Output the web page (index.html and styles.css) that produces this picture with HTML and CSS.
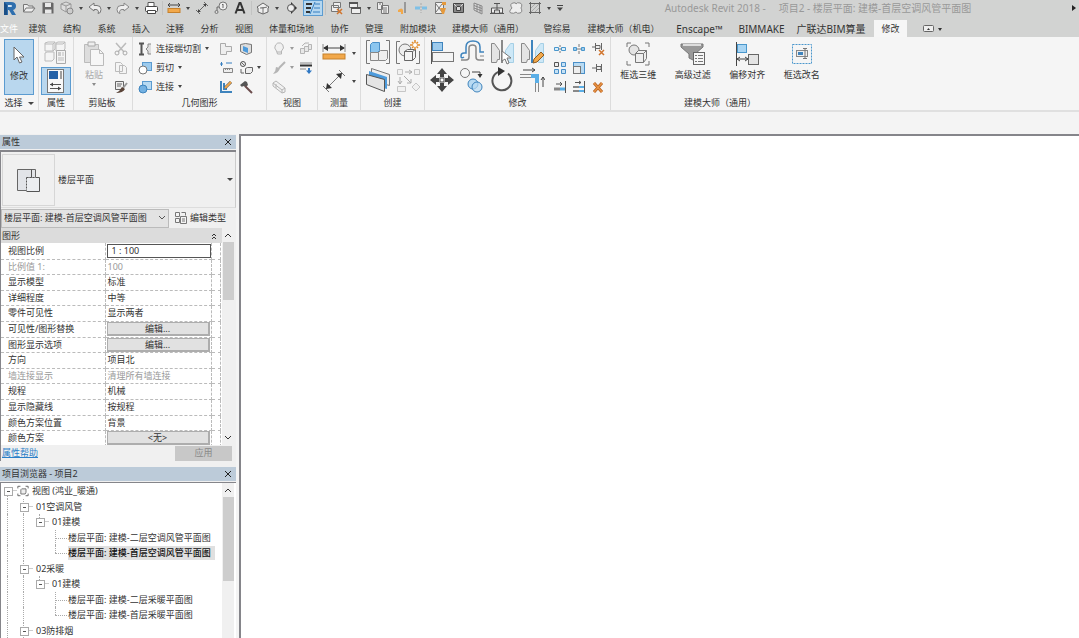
FILE: index.html
```
<!DOCTYPE html>
<html>
<head>
<meta charset="utf-8">
<title>Autodesk Revit 2018</title>
<link rel="stylesheet" href="styles.css">
</head>
<body>
<div class="app">
<header class="quickbar">
  <button class="q" aria-label="Revit"><svg viewBox="0 0 14 14"><path d="M1 1h7q5 0 5 4 0 3-3 4l3 5H9L6 9H5v5H1z" fill="#2f6fae"/><path d="M5 4h3q1 0 1 1t-1 1H5z" fill="#d5e4f2"/><path d="M1 1l3 3v10H1z" fill="#1b4f86"/></svg></button>
  <button class="q" aria-label="打开"><svg viewBox="0 0 14 14"><path d="M1.500 11V3.500h4l1 1.500h4.500v2M1.500 11l2.500-4h9l-3 4z" fill="#eee" stroke="#777"/></svg></button>
  <button class="q" aria-label="保存"><svg viewBox="0 0 14 14"><path d="M1.500 1.500h10l1 1v10h-11z" fill="#666"/><path d="M4 2h6v4H4zM4 8.500h6.500v4H4z" fill="#e8e8e8"/></svg></button>
  <button class="q" aria-label="同步"><svg viewBox="0 0 14 14"><path d="M6 1l5 2v5l-5 3-5-3V3zM1 3l5 2 5-2M6 5v6" fill="#ddd" stroke="#999"/><circle cx="10" cy="10" r="3" fill="#ccc" stroke="#888"/></svg></button>
  <i class="caret"></i>
  <button class="q" aria-label="放弃"><svg viewBox="0 0 14 14"><path d="M1 6l5-4v2.500h3q4 0 4 4t-3 4q1-2 0-3t-2-1H6V10z" fill="#eee" stroke="#777"/></svg></button>
  <i class="caret"></i>
  <button class="q" aria-label="重做"><svg viewBox="0 0 14 14"><path d="M13 6L8 2v2.500H5q-4 0-4 4t3 4q-1-2 0-3t2-1h2V10z" fill="#eee" stroke="#888"/></svg></button>
  <i class="caret"></i>
  <button class="q" aria-label="打印"><svg viewBox="0 0 14 14"><path d="M4 6V1.500h6V6" fill="#fff" stroke="#555"/><rect x="1.500" y="5.500" width="12" height="5" rx="1" fill="#fff" stroke="#444"/><path d="M3.500 9.500h8v3h-8z" fill="#fff" stroke="#444"/></svg></button>
  <i class="sep"></i>
  <button class="q" aria-label="测量"><svg viewBox="0 0 14 14"><path d="M1 4h12M3 2L1 4l2 2M11 2l2 2-2 2" fill="none" stroke="#444"/><rect x="1" y="7.500" width="12" height="4" fill="#f2a84a" stroke="#c6812c"/></svg></button>
  <i class="caret"></i>
  <button class="q" aria-label="对齐标注"><svg viewBox="0 0 14 14"><path d="M3 11l8-8M1 9l4 4M9 1l4 4" stroke="#666" fill="none"/><path d="M3 11V8l3 3zM11 3v3L8 3z" fill="#444"/></svg></button>
  <button class="q" aria-label="标记"><svg viewBox="0 0 14 14"><circle cx="9" cy="5" r="4" fill="#eee" stroke="#777"/><path d="M9 3v4M8 4l1-1M5 6H3v4" stroke="#666" fill="none"/><circle cx="2.500" cy="11" r="1.500" fill="#ddd" stroke="#777"/></svg></button>
  <button class="q" aria-label="文字"><svg viewBox="0 0 14 14"><path d="M2.500 12.500L6.500 2h1l4 10.500M4 9h6" fill="none" stroke="#333" stroke-width="2"/></svg></button>
  <i class="sep"></i>
  <button class="q" aria-label="三维视图"><svg viewBox="0 0 14 14"><path d="M1 6l6-4 6 4-1 1v4l-5 2-5-2V7z" fill="#eee" stroke="#666"/><path d="M7 7v6M4 7h3l4-1" stroke="#777"/></svg></button>
  <i class="caret"></i>
  <button class="q narrow" aria-label="剖面"><svg viewBox="2 0 10 14"><path d="M6 1l6 6-6 6z" fill="#333"/><circle cx="6" cy="7" r="3.500" fill="#eee" stroke="#555"/></svg></button>
  <button class="q on" aria-label="细线"><svg viewBox="0 0 18 14"><path d="M2 3h6M2 7h5M2 11h4" stroke="#333" stroke-width="2"/><path d="M11 3h5M10 7h6M9 11h7M11 1L6 13" stroke="#377fc0" fill="none"/></svg></button>
  <i class="sep tight"></i>
  <button class="q" aria-label="关闭隐藏窗口"><svg viewBox="0 0 14 14"><path d="M4.500 1.500h7v5h-7zM2.500 4.500h7v6h-7z" fill="#eee" stroke="#777"/><path d="M8 8l5 5M13 8l-5 5" stroke="#d0742d" stroke-width="1.500"/></svg></button>
  <button class="q" aria-label="切换窗口"><svg viewBox="0 0 14 14"><path d="M1.500 1.500h8v5h-8zM3.500 6.500h9v6h-9z" fill="#eee" stroke="#666"/><path d="M1 2h9M3 7h10" stroke="#555" stroke-width="2"/></svg></button>
  <i class="caret"></i>
  <button class="q" aria-label="用户界面"><svg viewBox="0 0 14 14"><path d="M1.500 1.500h5v7h-5zM5.500 4.500h7v8h-7z" fill="#eee" stroke="#777"/><path d="M7 7h4M7 9h4M7 11h4M3 3h2" stroke="#777"/></svg></button>
  <button class="q" aria-label="管道"><svg viewBox="0 0 14 14"><path d="M10 1v11" stroke="#999" stroke-width="2"/><path d="M3 9q4-3 5 0v4H6v-2H3z" fill="#f2a84a"/></svg></button>
  <button class="q" aria-label="拆分"><svg viewBox="0 0 14 14"><path d="M1 7h5M8 7h5" stroke="#7fc0e6" stroke-width="3"/><path d="M7 2v10" stroke="#aaa" stroke-dasharray="2 1"/></svg></button>
  <button class="q" aria-label="过滤"><svg viewBox="0 0 14 14"><path d="M2.500 1.500h8v11h-8zM3 3l6 8M9 3l-6 8" fill="#eee" stroke="#777"/><path d="M9 1h4v3H9zM7 7h6l-2 6H9z" fill="#e59a3d"/></svg></button>
  <button class="q" aria-label="竖井"><svg viewBox="0 0 14 14"><path d="M1.500 2.500h10v9h-10z" fill="#888" stroke="#444"/><path d="M4.500 5.500h4v4h-4z" fill="#ddd" stroke="#444"/><path d="M2 3l2.500 2.500M11 3L8.500 5.500" stroke="#ddd"/></svg></button>
  <button class="q" aria-label="墙"><svg viewBox="0 0 14 14"><path d="M3 2l8 3v8L3 9zM3 4.500l8 3M3 7l8 3M6 3v8M9 4v8" fill="#ddd" stroke="#888"/></svg></button>
  <button class="q" aria-label="阀门"><svg viewBox="0 0 14 14"><path d="M1.500 7v5h3V9h5v3h3V7zM7 9V3M4 2.500h6M0 12.500h14" fill="#eee" stroke="#555"/></svg></button>
  <button class="q" aria-label="云线"><svg viewBox="0 0 14 14"><path d="M3 7q-3-4 1-5 3-1 3 1 1-2 4-1t1 5q2 4-1 5t-4-1q-2 2-5 1t1-5z" fill="#eee" stroke="#888"/></svg></button>
  <button class="q" aria-label="填充区域"><svg viewBox="0 0 14 14"><path d="M2.500 1v12M11.500 1v12M1 2.500h12M1 11.500h12" stroke="#666"/><path d="M3 7l4-4M3 11l8-8M7 11l4-4" stroke="#aaa"/></svg></button>
  <i class="caret"></i>
  <svg class="more" viewBox="0 0 8 8"><path d="M1 1.500h6" stroke="#444"/><path d="M1 3.500h6L4 7z" fill="#444"/></svg>
  <h1 class="title">Autodesk Revit 2018 -&nbsp; &nbsp; &nbsp;项目2 - 楼层平面: 建模-首层空调风管平面图</h1>
  <i class="caret right"></i>
</header>

<nav class="tabs">
  <button class="file">文件</button><button>建筑</button><button>结构</button><button>系统</button><button>插入</button><button>注释</button><button>分析</button><button>视图</button><button>体量和场地</button><button>协作</button><button>管理</button><button>附加模块</button><button>建模大师（通用）</button><button>管综易</button><button>建模大师（机电）</button><button class="latin">Enscape™</button><button class="latin">BIMMAKE</button><button class="latin">广联达BIM算量</button><button class="active">修改</button>
  <button class="toggle" aria-label="最小化"><svg viewBox="0 0 20 8"><rect x="1.500" y=".5" width="10" height="6" rx="1" fill="#eee" stroke="#666"/><path d="M5 5l1.500-2L8 5zM16 3h4l-2 3z" fill="#333"/></svg></button>
</nav>

<section class="ribbon">
  <div class="panel p-select">
    <div class="tools"><button class="modify"><svg viewBox="0 0 14 20"><path d="M2 2v13l3-3 2.500 6 2.500-1-2.500-5H12z" fill="#fff" stroke="#666"/></svg>修改</button></div>
    <div class="label">选择 <i class="caret big"></i></div>
  </div>
  <div class="panel p-props">
    <div class="tools stack">
      <button class="half" aria-label="类型属性"><svg viewBox="0 0 28 26"><path d="M3 3l3-1h7v7l-2 2H3zM14 3l2-1h7v7l-2 2h-7zM3 13l2-1h7v7l-2 2H3zM3 4h8v7M11 4l2-2M14 4h7M21 4l2-2" fill="#f4f4f4" stroke="#bbb"/><path d="M14.500 10.500h9v13h-9z" fill="#f4f4f4" stroke="#aaa"/><path d="M16 12h3v4h-3z" fill="#ccc"/><path d="M20 13h2M20 15h2M16 18h6M16 20h6" stroke="#bbb"/></svg></button>
      <button class="half on" aria-label="属性"><svg viewBox="0 0 28 26"><rect x="5.500" y="1.500" width="16" height="23" fill="#f8f8f8" stroke="#777"/><path d="M7 3h9v8H7z" fill="#2462a8"/><path d="M18 4h2M18 6h2M18 8h2M18 10h2" stroke="#444"/><path d="M8 16.500h11M8 20.500h11" stroke="#555"/><path d="M8 16.500l3-2v4zM19 20.500l-3-2v4z" fill="#444"/></svg></button>
    </div>
    <div class="label">属性</div>
  </div>
  <div class="panel p-clip">
    <div class="tools row">
      <button class="paste"><svg viewBox="0 0 24 28"><path d="M2.500 5.500h14v18h-14z" fill="#ddd" stroke="#bbb"/><path d="M6 3h7v4H6z" fill="#eee" stroke="#aaa"/><path d="M8.500 10.500h9l4 4v12h-13z" fill="#f6f6f6" stroke="#bbb"/><path d="M17.500 10.500v4h4" fill="none" stroke="#bbb"/></svg>粘贴<i class="caret"></i></button>
      <div class="col3">
        <button aria-label="剪切到剪贴板"><svg viewBox="0 0 14 14"><path d="M2 1l8 9M12 1L4 10" stroke="#bbb" stroke-width="1.500"/><circle cx="3" cy="11" r="2" fill="none" stroke="#aaa"/><circle cx="11" cy="11" r="2" fill="none" stroke="#aaa"/></svg></button>
        <button aria-label="复制到剪贴板"><svg viewBox="0 0 14 14"><path d="M1.500 1.500h5l2 2v7h-7zM5.500 4.500h5l2 2v6h-7z" fill="#f4f4f4" stroke="#bbb"/></svg></button>
        <button aria-label="匹配类型"><svg viewBox="0 0 14 14"><path d="M1.500 1.500h8v8h-8zM3 4h5M3 6h4" fill="#eee" stroke="#666"/><path d="M13 3L9 8" stroke="#999" stroke-width="2"/><path d="M8 7l3 2q-2 4-9 4 4-2 6-6z" fill="#5a4438"/></svg></button>
      </div>
    </div>
    <div class="label">剪贴板</div>
  </div>
  <div class="panel p-geo">
    <div class="tools geo">
      <div class="col3 left">
        <button><svg viewBox="0 0 14 14"><path d="M1 1.500h5M1 12.500h5M3.500 2v10" stroke="#555" stroke-width="2"/><path d="M13 2h-3v3L8 7l2 2v3h3" fill="#ddd" stroke="#888"/></svg>连接端切割 <i class="caret"></i></button>
        <button><svg viewBox="0 0 14 14"><rect x="4.500" y="1.500" width="9" height="8" fill="#9dcbed" stroke="#5b9bd0"/><circle cx="5" cy="9" r="4" fill="#fff" stroke="#777"/></svg>剪切 <i class="caret"></i></button>
        <button><svg viewBox="0 0 14 14"><rect x="4.500" y="1.500" width="9" height="8" fill="#b8daf2" stroke="#5b9bd0"/><circle cx="5" cy="9" r="4" fill="#73b1e2" stroke="#3f84bd"/></svg>连接 <i class="caret"></i></button>
      </div>
      <div class="col3">
        <button aria-label="连接端"><svg viewBox="0 0 14 14"><path d="M1.500 1.500h5v3h6v5h-5v3h-6z" fill="#eee" stroke="#aaa"/></svg></button>
        <button aria-label="拆分面"><svg viewBox="0 0 14 14"><path d="M1 3h3M2.500 1v4M7 2h6" stroke="#377fc0"/><path d="M4.500 7.500h9v4h-9zM6.500 7v2M8.500 7v2M10.500 7v2" fill="#eee" stroke="#888"/></svg></button>
        <button aria-label="梁柱连接"><svg viewBox="0 0 14 14"><path d="M2 1v11h11M5 3v6h3" stroke="#3f84bd" fill="none" stroke-width="2"/><path d="M6 8l6-6" stroke="#555" stroke-width="3"/><path d="M6 8l6-6" stroke="#f2a84a" stroke-width="2"/></svg></button>
      </div>
      <div class="col3">
        <button aria-label="墙连接"><svg viewBox="0 0 14 14"><path d="M1.500 2.500l5-1 6 1v8l-5 2-6-3z" fill="#ddd" stroke="#777"/><path d="M4 4l5 2v5L4 9z" fill="#4d9bdc"/></svg></button>
        <button aria-label="填色"><svg viewBox="0 0 14 14"><circle cx="4" cy="3" r="2.500" fill="#eee" stroke="#555"/><path d="M2 1l4 4M2 8v4h3M6.500 7.500l2-1h5v4l-2 2h-5z" fill="#eee" stroke="#666"/></svg></button>
        <button aria-label="拆除"><svg viewBox="0 0 14 14"><path d="M1 5l5-4 2 1 1 3-2 2-3-1-1 1z" fill="#555"/><path d="M6 6l7 7" stroke="#6b4c4c" stroke-width="2"/></svg></button>
      </div>
      <i class="caret"></i>
    </div>
    <div class="label">几何图形</div>
  </div>
  <div class="panel p-view">
    <div class="tools row">
      <div class="col3 fade">
        <button aria-label="隐藏"><svg viewBox="0 0 14 14"><path d="M4.500 9q-3-3-1-6t5-2 3 5l-2 3v3h-4zM5 10h4" fill="#eee" stroke="#777"/></svg><i class="caret"></i></button>
        <button aria-label="替换"><svg viewBox="0 0 14 14"><path d="M13 1L7 7" stroke="#777" stroke-width="2"/><path d="M8 7q-1 5-7 6 3-3 3-7z" fill="#777"/></svg><i class="caret"></i></button>
        <button aria-label="选择框"><svg viewBox="0 0 14 14"><path d="M1 3l3-2 9 7v4l-3 1-9-7zM1 3l9 7v3M10 10l3-2M4 4v4" fill="#eee" stroke="#777"/></svg></button>
      </div>
      <div class="col3">
        <button class="dim" aria-label="置换图元"><svg viewBox="0 0 14 14"><path d="M1.500 6.500h4v5h-4zM5.500 4.500h4v5h-4zM9.500 2.500h3v5h-3zM3 4l3-3h4" fill="#ddd" stroke="#777"/></svg></button>
        <button aria-label="线处理"><svg viewBox="0 0 14 14"><path d="M1 2h12" stroke="#888"/><path d="M1 4.500h12" stroke="#333" stroke-width="2"/><path d="M1 8h6" stroke="#888"/><path d="M10 7v4" stroke="#2f78c4" stroke-width="2"/><path d="M7 9.500h6L10 13z" fill="#2f78c4"/></svg></button>
        <span></span>
      </div>
    </div>
    <div class="label">视图</div>
  </div>
  <div class="panel p-measure">
    <div class="tools stack">
      <button class="half" aria-label="测量"><svg viewBox="0 0 24 24"><path d="M2 7h20" stroke="#444"/><path d="M1 7l5-3v6zM23 7l-5-3v6z" fill="#333"/><path d="M1 3v8M23 3v8" stroke="#888"/><rect x="1" y="13" width="22" height="5" fill="#f2a84a" stroke="#c6812c"/></svg><i class="caret"></i></button>
      <button class="half" aria-label="标注"><svg viewBox="0 0 24 24"><path d="M4 20L20 4M1 17l6 6M17 1l6 6" stroke="#777"/><path d="M4 20l1-6 5 5zM20 4l-6 1 5 5z" fill="#333"/></svg><i class="caret"></i></button>
    </div>
    <div class="label">测量</div>
  </div>
  <div class="panel p-create">
    <div class="tools grid2">
      <button aria-label="创建组"><svg viewBox="0 0 26 26"><path d="M5 1.500H1.500v23H5M21 1.500h3.500v23H21" fill="none" stroke="#777"/><path d="M5.500 5.500l2-2h7v8l-2 2h-7z" fill="#8cc6ef" stroke="#4a8fc7"/><path d="M5.500 13.500h8v8h-8zM13.500 13.500l2-2h7v8l-2 2h-7" fill="#eee" stroke="#888"/></svg></button>
      <button aria-label="创建类似实例"><svg viewBox="0 0 26 26"><path d="M5 2.500H1.500v22H5M21 24.500h3.500V12" fill="none" stroke="#777"/><circle cx="10" cy="11" r="6" fill="#eee" stroke="#777"/><path d="M9.500 12.500l3-2h8v8l-3 3h-8zM9.500 12.500h8v9M17.500 12.500l3-2" fill="#f4f4f4" stroke="#666"/><path d="M20 1v10M15 6h10M17 3l6 6M23 3l-6 6" stroke="#e08b2a" stroke-width="1.500"/><circle cx="20" cy="6" r="2" fill="#fff"/></svg></button>
      <button aria-label="创建部件"><svg viewBox="0 0 26 26"><path d="M6.500 1.500l18 6v11l-18-5z" fill="#eee" stroke="#777"/><path d="M4 4l18 6v12L4 17z" fill="#4d9bdc"/><path d="M1.500 7.500l18 5v12l-18-7z" fill="#e4e4e4" stroke="#555"/></svg></button>
      <button class="dim" aria-label="创建零件"><svg viewBox="0 0 26 26"><path d="M2.500 2.500h5v5h-5zM19.500 2.500h5v5h-5zM2.500 19.500h8v5h-8zM17 20l4-4 4 4-4 4z" fill="#eee" stroke="#999"/><path d="M10 5h7M14 3l3 2-3 2M5 10v7M3 14l2 3 2-3M9 9l7 7M16 12v4h-4" stroke="#666" fill="none"/></svg></button>
    </div>
    <div class="label">创建</div>
  </div>
  <div class="panel p-edit">
    <div class="tools editgrid">
      <div class="grid4">
        <button aria-label="对齐"><svg viewBox="0 0 26 26"><path d="M2.500 1v24" stroke="#555"/><rect x="3.500" y="3.500" width="10" height="8" fill="#9dcbed" stroke="#3f84bd"/><rect x="3.500" y="13.500" width="21" height="9" fill="#f4f4f4" stroke="#777"/></svg></button>
        <button aria-label="偏移"><svg viewBox="0 0 26 26"><path d="M2 21h5q3 0 3-3V9q0-3 3.500-3T17 9v9q0 3 3 3h5" fill="none" stroke="#888" stroke-width="1.500"/><path d="M25 13h-4V8q0-6-7-6T7 8v6H5q-3 0-3 3t3 1h0" fill="none" stroke="#3f84bd" stroke-width="1.500"/><path d="M25 17h-4" stroke="#888"/></svg></button>
        <button aria-label="镜像拾取轴"><svg viewBox="0 0 26 26"><path d="M2.500 4.500h3l5 7v9h-2l-1 3h-5z" fill="#e4e4e4" stroke="#888"/><path d="M24.500 4.500h-3l-5 7v9h2l1 3h5z" fill="#cde8f7" stroke="#a5cfe5"/><path d="M13 1v23" stroke="#666" stroke-width="1.500"/><path d="M13 12v10l3-2 2 5 2-1-2-5h4z" fill="#fff" stroke="#777"/></svg></button>
        <button aria-label="镜像绘制轴"><svg viewBox="0 0 26 26"><path d="M2.500 4.500h3l5 7v9h-2l-1 3h-5z" fill="#e4e4e4" stroke="#888"/><path d="M24.500 4.500h-3l-5 7v9h2l1 3h5z" fill="#cde8f7" stroke="#a5cfe5"/><path d="M13 1v23" stroke="#3f84bd" stroke-width="2"/><path d="M14 24l1-4 7-7 3 3-7 7z" fill="#f2a84a" stroke="#8a5a22"/></svg></button>
        <button aria-label="移动"><svg viewBox="0 0 26 26"><path d="M13 1l5 6h-3v3h-4V7H8zM13 25l5-6h-3v-3h-4v3H8zM1 13l6-5v3h3v4H7v3zM25 13l-6-5v3h-3v4h3v3z" fill="#444"/><rect x="11" y="11" width="4" height="4" fill="#fff" stroke="#444"/></svg></button>
        <button aria-label="复制"><svg viewBox="0 0 26 26"><circle cx="6" cy="6" r="4.500" fill="#f6f6f6" stroke="#777"/><path d="M13 5h8v4" fill="none" stroke="#444"/><path d="M18.500 7h5L21 11z" fill="#333"/><circle cx="14" cy="17" r="5" fill="#b8daf2" stroke="#3f84bd"/><circle cx="18" cy="20" r="5" fill="#b8daf2" fill-opacity=".7" stroke="#3f84bd"/></svg></button>
        <button aria-label="旋转"><svg viewBox="0 0 26 26"><path d="M19 6.500a9.500 9.500 0 1 1-8-2" fill="none" stroke="#555" stroke-width="2"/><path d="M9 0l7 4-7 5z" fill="#333"/></svg></button>
        <button aria-label="修剪延伸为角"><svg viewBox="0 0 26 26"><path d="M1 7.500h12M1 10.500h12M16.500 14v11M19.500 14v11" stroke="#888"/><path d="M12 9h6v7" fill="none" stroke="#5aaee6" stroke-width="4"/><path d="M4 3h12M13 1l3 2-3 2M24 20V10M22 13l2-3 2 3" fill="none" stroke="#444"/></svg></button>
      </div>
      <div class="grid3">
        <button aria-label="拆分图元"><svg viewBox="0 0 14 14"><path d="M1.500 5.500h4v3h-4zM8.500 5.500h4v3h-4z" fill="#dbeffb" stroke="#4a97cc"/><path d="M7 3v9" stroke="#777" stroke-dasharray="2 1"/></svg></button>
        <button aria-label="用间隙拆分"><svg viewBox="0 0 14 14"><path d="M1.500 5.500h3v3h-3zM9.500 5.500h3v3h-3z" fill="#9dcbed" stroke="#4a97cc"/><path d="M7 2v3M7 9v3M5 7h4" stroke="#777"/></svg></button>
        <button aria-label="解锁"><svg viewBox="0 0 14 14"><path d="M1 5h3M4.500 1v8M5 3.500h4v3H5M10.500 1v7" fill="#eee" stroke="#666"/><path d="M8 8l5 5M13 8l-5 5" stroke="#d0742d" stroke-width="1.500"/></svg></button>
        <button aria-label="阵列"><svg viewBox="0 0 14 14"><path d="M1.500 1.500h4v4h-4z" fill="#eee" stroke="#555"/><path d="M8.500 1.500h4v4h-4zM1.500 8.500h4v4h-4zM8.500 8.500h4v4h-4z" fill="#c6e2f5" stroke="#4a8fc7"/></svg></button>
        <button aria-label="缩放"><svg viewBox="0 0 14 14"><rect x="1.500" y="1.500" width="11" height="11" fill="#b8daf2" stroke="#4a8fc7"/><rect x="1.500" y="5.500" width="7" height="7" fill="#eee" stroke="#777"/></svg></button>
        <button aria-label="锁定"><svg viewBox="0 0 14 14"><path d="M1 7h4M5.500 3v8M6 5.500h4v3H6M10.500 3v8" fill="#eee" stroke="#666"/></svg></button>
        <button aria-label="修剪单个图元"><svg viewBox="0 0 14 14"><path d="M12.500 1v12M3 4h6M7 2l2 2-2 2" fill="none" stroke="#555"/><path d="M1 9h6" stroke="#888" stroke-width="3"/><path d="M7 9h5" stroke="#5aaee6" stroke-width="3"/></svg></button>
        <button aria-label="修剪多个图元"><svg viewBox="0 0 14 14"><path d="M12.500 1v12M3 2.500h6M7 1l2 1.500L7 4" fill="none" stroke="#555"/><path d="M1 7h6M1 11h6" stroke="#888" stroke-width="2"/><path d="M7 7h5M7 11h5" stroke="#5aaee6" stroke-width="2"/></svg></button>
        <button aria-label="删除"><svg viewBox="0 0 14 14"><path d="M3 3l8 9M11 3L3 12" stroke="#b86020" stroke-width="3"/><path d="M3 3l8 9M11 3L3 12" stroke="#e79343" stroke-width="1.500"/></svg></button>
      </div>
    </div>
    <div class="label">修改</div>
  </div>
  <div class="panel p-master">
    <div class="tools row">
      <button><svg viewBox="0 0 26 26"><path d="M2 6V2h4M20 2h4v4M24 20v4h-4M6 24H2v-4" fill="none" stroke="#777"/><circle cx="9" cy="9" r="5" fill="#e4e4e4" stroke="#777"/><path d="M10.500 12.500l3-3h8v8l-3 4h-8zM10.500 12.500h8v9M18.500 12.500l3-3" fill="#eee" stroke="#777"/></svg>框选三维</button>
      <button><svg viewBox="0 0 26 26"><path d="M1 3h22v3l-8 7v7l-6-3v-4L1 6z" fill="#999" stroke="#777"/><path d="M3 4h18" stroke="#ddd" stroke-width="2"/><rect x="13.500" y="11.500" width="11" height="12" fill="#f6f6f6" stroke="#666"/><path d="M15 14.500h2M18 14.500h5M15 17.500h2M18 17.500h5M15 20.500h2M18 20.500h5" stroke="#777"/></svg>高级过滤</button>
      <button><svg viewBox="0 0 26 26"><path d="M2.500 1v24" stroke="#444"/><rect x="3.500" y="3.500" width="9" height="8" fill="#a9d5f3" stroke="#4a97cc"/><rect x="14.500" y="13.500" width="10" height="10" fill="#e4e4e4" stroke="#666"/><path d="M3 18h11M6 16l-3 2 3 2M11 16l3 2-3 2" fill="none" stroke="#444"/></svg>偏移对齐</button>
      <button><svg viewBox="0 0 26 26"><rect x="3.500" y="3.500" width="19" height="19" fill="none" stroke="#4a97cc" stroke-dasharray="2 1"/><rect x="7.500" y="9.500" width="11" height="6" fill="#eee" stroke="#888"/><path d="M9 11h5v3H9z" fill="#3f84bd"/><path d="M16 7v11M14 7.500h4M14 17.500h4" stroke="#777"/></svg>框选改名</button>
    </div>
    <div class="label">建模大师（通用）</div>
  </div>
</section>
<div class="options"></div>

<div class="work">
  <aside class="side">
    <section class="palette">
      <h2>属性<button class="close" aria-label="关闭"><svg viewBox="0 0 8 8"><path d="M1 1l6 6M7 1L1 7" stroke="#222"/></svg></button></h2>
      <div class="body">
        <button class="type"><span class="thumb"><svg viewBox="0 0 26 26"><path d="M1.500 2.500h18v8h-8v13h-10z" fill="#e2e4e8" stroke="#666"/><path d="M10.500 10.500h13v14h-13z" fill="#eceef1"/><path d="M10.500 10.500v13M10.500 10.500h9" stroke="#555" stroke-dasharray="2 1" fill="none"/><path d="M15.500 2.500v8M19.500 10.500h4v14h-13" stroke="#555" fill="none"/></svg></span><span class="typename">楼层平面</span><i class="caret big"></i></button>
        <div class="selrow">
          <select aria-label="视图"><option>楼层平面: 建模-首层空调风管平面图</option></select>
          <button class="edittype"><svg viewBox="0 0 14 14"><path d="M1.500 1.500h4v4h-4zM1.500 7.500h4v4h-4zM7.500 1.500h4v3M6.500 5.500h6v7h-6zM8 8h3M8 10h3" fill="#f4f4f4" stroke="#777"/></svg>编辑类型</button>
        </div>
        <div class="scrollwrap">
          <div class="props">
            <div class="group">图形<svg viewBox="0 0 8 8"><path d="M2 4l2-2 2 2M2 7l2-2 2 2" fill="none" stroke="#333"/></svg></div>
            <table>
              <tr><th><label for="scale">视图比例</label></th><td><input id="scale" value="1 : 100"></td><td></td></tr>
              <tr class="off"><th>比例值 1:</th><td>100</td><td></td></tr>
              <tr><th>显示模型</th><td>标准</td><td></td></tr>
              <tr><th>详细程度</th><td>中等</td><td></td></tr>
              <tr><th>零件可见性</th><td>显示两者</td><td></td></tr>
              <tr><th>可见性/图形替换</th><td><button>编辑...</button></td><td></td></tr>
              <tr><th>图形显示选项</th><td><button>编辑...</button></td><td></td></tr>
              <tr><th>方向</th><td>项目北</td><td></td></tr>
              <tr class="off"><th>墙连接显示</th><td>清理所有墙连接</td><td></td></tr>
              <tr><th>规程</th><td>机械</td><td></td></tr>
              <tr><th>显示隐藏线</th><td>按规程</td><td></td></tr>
              <tr><th>颜色方案位置</th><td>背景</td><td></td></tr>
              <tr><th>颜色方案</th><td><button>&lt;无&gt;</button></td><td></td></tr>
            </table>
          </div>
          <div class="scroll"><svg viewBox="0 0 8 8"><path d="M1 6l3-3 3 3" fill="none" stroke="#333"/></svg><i class="thumbbar"></i><svg viewBox="0 0 8 8"><path d="M1 2l3 3 3-3" fill="none" stroke="#333"/></svg></div>
        </div>
        <div class="foot"><a href="#help">属性帮助</a><button disabled>应用</button></div>
      </div>
    </section>
    <section class="palette browser">
      <h2>项目浏览器 - 项目2<button class="close" aria-label="关闭"><svg viewBox="0 0 8 8"><path d="M1 1l6 6M7 1L1 7" stroke="#222"/></svg></button></h2>
      <div class="treewrap">
        <ul class="tree">
          <li><i class="g top0 box"></i><svg viewBox="0 0 14 14"><path d="M1 4V1.500h3M10 1.500h3V4M13 10v2.500h-3M4 12.500H1V10" fill="none" stroke="#555"/><path d="M4.500 5.500l1-1h5v4l-1 2h-5z" fill="#eee" stroke="#666"/></svg><span>视图 (鸿业_暖通)</span></li>
          <li><i class="g v"></i><i class="g v box"></i><span>01空调风管</span></li>
          <li><i class="g v"></i><i class="g v"></i><i class="g end box"></i><span>01建模</span></li>
          <li><i class="g v"></i><i class="g v"></i><i class="g"></i><i class="g v leaf"></i><span>楼层平面: 建模-二层空调风管平面图</span></li>
          <li><i class="g v"></i><i class="g v"></i><i class="g"></i><i class="g end leaf"></i><span class="cur">楼层平面: 建模-首层空调风管平面图</span></li>
          <li><i class="g v"></i><i class="g v box"></i><span>02采暖</span></li>
          <li><i class="g v"></i><i class="g v"></i><i class="g end box"></i><span>01建模</span></li>
          <li><i class="g v"></i><i class="g v"></i><i class="g"></i><i class="g v leaf"></i><span>楼层平面: 建模-二层采暖平面图</span></li>
          <li><i class="g v"></i><i class="g v"></i><i class="g"></i><i class="g end leaf"></i><span>楼层平面: 建模-首层采暖平面图</span></li>
          <li><i class="g v"></i><i class="g v box"></i><span>03防排烟</span></li>
        </ul>
        <div class="scroll"><svg viewBox="0 0 8 8"><path d="M1 6l3-3 3 3" fill="none" stroke="#333"/></svg><i class="thumbbar"></i></div>
      </div>
    </section>
  </aside>
  <main class="canvas"></main>
</div>
</div>
</body>
</html>
```

FILE: styles.css
```
* { box-sizing: border-box; }
body { margin: 0; font: 9px/12px "Noto Sans", "Noto Sans CJK SC", sans-serif; color: #333; background: #f4f4f4; }
button { font: inherit; color: inherit; background: none; border: 0; padding: 0; white-space: nowrap; }
svg { display: block; flex: none; }
h1, h2 { margin: 0; font-weight: normal; }
.app { height: 100vh; display: flex; flex-direction: column; overflow: hidden; }

.caret { flex: none; width: 4px; border: 2px solid transparent; border-top: 3px solid #444; border-bottom: 0; }
.caret.big { width: 6px; border-width: 3px 3px 0; }
.caret.right { border: 3px solid transparent; border-left: 4px solid #222; border-right: 0; }
.more { width: 8px; height: 8px; }

.quickbar { display: flex; align-items: center; gap: 5px; height: 20px; padding: 0 3px 4px 3px; background: #d2d3d2; flex: none; }
.q { flex: none; width: 14px; }
.q svg { width: 14px; height: 14px; }
.q.narrow { width: 10px; margin: 0 1px 0 3px; }
.q.narrow svg { width: 10px; }
.q.on { width: 20px; height: 16px; border: 1px solid #5b9bd0; background: #b5d7f0; }
.q.on svg { width: 18px; }
.sep { flex: none; width: 1px; height: 14px; background: #c2c3c2; margin: 0 -1px; }
.sep.tight { margin: 0 -2px 0 -3px; }
.title { flex: 1; text-align: center; font-size: 10px; color: #999; white-space: nowrap; overflow: hidden; }

.tabs { flex: none; display: grid; grid-template-columns: 20px 35px 34px 35px 34px 34px 35px 34px 61px 35px 34px 54px 86px 52px 81px 71px 53px 86px 33px auto; height: 17px; align-items: center; background: #d2d3d2; }
.tabs button { height: 17px; text-align: center; }
.tabs .latin { font-size: 10px; }
.tabs .file { color: #fff; text-align: left; }
.tabs .active { background: #f6f6f6; }
.tabs .toggle { padding-left: 15px; }
.toggle svg { width: 20px; height: 8px; }

.ribbon { flex: none; display: flex; height: 75px; background: #f5f5f5; border-bottom: 2px solid #e0e0e0; }
.panel { flex: none; display: flex; flex-direction: column; border-right: 1px solid #dcdcdc; }
.panel:last-child { border-right: 0; }
.tools { height: 58px; padding-top: 2px; display: flex; }
.label { display: flex; align-items: center; justify-content: center; gap: 5px; height: 15px; padding-top: 1px; white-space: nowrap; }
.row { flex-direction: row; }
.stack { flex-direction: column; align-items: center; }
.col3 { display: grid; grid-template-rows: repeat(3, 19px); align-items: center; }
.col3 svg { width: 14px; height: 14px; }
.col3 button { display: flex; align-items: center; gap: 4px; }
.dim, .fade { opacity: .5; }

.p-select { width: 39px; }
.modify { width: 30px; height: 56px; margin-left: 4px; border: 1px solid #5b9bd0; background: #b9d7ee; display: flex; flex-direction: column; align-items: center; gap: 5px; padding-top: 5px; }
.modify svg { width: 14px; height: 20px; }
.p-props { width: 35px; }
.half { width: 30px; height: 28px; display: flex; align-items: center; justify-content: center; flex: none; }
.half svg { width: 28px; height: 26px; }
.half.on { border: 1px solid #5b9bd0; background: #b9d7ee; }
.p-clip { width: 59px; }
.paste { width: 40px; display: flex; flex-direction: column; align-items: center; color: #aaa; gap: 2px; }
.paste svg { width: 24px; height: 28px; }
.paste .caret { opacity: .6; }
.p-clip .label { padding-right: 2px; }
.p-geo { width: 134px; }
.geo { padding-left: 5px; gap: 6px; align-items: flex-start; }
.geo .left { width: 75px; }
.geo > .caret { margin: 27px 0 0 -2px; }
.p-view { width: 51px; }
.p-view .row { padding-left: 5px; gap: 5px; }
.p-view .fade { width: 22px; }
.p-measure { width: 43px; }
.p-measure .half { width: 34px; gap: 6px; }
.p-measure .half svg { width: 24px; height: 24px; }
.p-create { width: 64px; }
.grid2 { display: grid; grid-template-columns: 26px 26px; gap: 2px 4px; padding-left: 4px; align-content: start; }
.grid2 svg, .grid4 svg, .p-master svg { width: 26px; height: 26px; }
.p-edit { width: 186px; }
.editgrid { gap: 8px; padding-left: 4px; }
.grid4 { display: grid; grid-template-columns: repeat(4, 26px); gap: 2px 4px; align-content: start; }
.grid3 { display: grid; grid-template-columns: repeat(3, 14px); grid-template-rows: repeat(3, 19px); column-gap: 5px; align-items: center; }
.grid3 svg { width: 14px; height: 14px; }
.p-master { width: 218px; }
.p-master button { width: 55px; display: flex; flex-direction: column; align-items: center; gap: 2px; height: 42px; margin-top: 2px; }

.options { flex: none; height: 22px; }
.work { flex: 1; min-height: 0; display: flex; }
.side { width: 236px; flex: none; display: flex; flex-direction: column; background: #f0f0f0; }
.canvas { flex: 1; margin-left: 3px; background: #fff; border: 2px solid #85858a; border-width: 2px 0 0 2px; }
.palette h2 { display: flex; align-items: center; justify-content: space-between; height: 14px; padding: 0 4px 0 2px; background: #bccbd9; margin-top: 1px; font-size: 9px; }
.close svg { width: 8px; height: 8px; }
.body { margin-top: 1px; border-left: 1px solid #85858a; border-top: 2px solid #85858a; }
.type { width: 100%; height: 56px; display: flex; align-items: center; padding: 0 2px 0 1px; border-right: 1px solid #ccc; border-bottom: 1px solid #ddd; }
.thumb { width: 53px; height: 52px; border: 1px solid #d6d6d6; display: flex; align-items: center; justify-content: center; }
.thumb svg { width: 26px; height: 26px; }
.typename { flex: 1; text-align: left; padding-left: 3px; }
.selrow { display: flex; height: 20px; align-items: center; gap: 5px; }
select { width: 168px; height: 19px; font: inherit; color: inherit; padding: 0 12px 0 2px; border: 1px solid #bbb; border-radius: 0; appearance: none; background: #e3e3e3 url("data:image/svg+xml,%3Csvg xmlns='http://www.w3.org/2000/svg' viewBox='0 0 8 8'%3E%3Cpath d='M1 2l3 3 3-3' fill='none' stroke='%23555'/%3E%3C/svg%3E") no-repeat right 2px center / 8px; }
.edittype { display: flex; gap: 2px; align-items: center; }
.edittype svg { width: 14px; height: 14px; }
.scrollwrap { display: flex; height: 217px; overflow: hidden; }
.props { width: 221px; background: #fff; overflow: hidden; }
.group { display: flex; justify-content: space-between; align-items: center; height: 15px; background: #dcdcdc; padding: 0 4px 0 1px; }
.group svg { width: 8px; height: 8px; }
table { border-collapse: collapse; table-layout: fixed; width: 220px; }
tr { height: 16px; }
tr:nth-child(5n+2), tr:nth-child(5n+4) { height: 15px; }
th, td { font-weight: normal; text-align: left; padding: 0; line-height: 12px; border-bottom: 1px dashed #bbb; border-right: 1px dashed #bbb; }
th { width: 104px; padding-left: 7px; }
td { padding-left: 2px; }
td:nth-child(2) { width: 106px; }
td:has(input), td:has(button) { padding: 0 0 0 1px; }
.off { color: #999; }
input { display: block; width: 104px; height: 14px; border: 1px solid #555; padding: 0 4px; font: inherit; color: inherit; }
td button { display: block; width: 103px; height: 14px; background: #e1e1e1; border: 1px solid #adadad; border-width: 1px 2px 2px 1px; line-height: 11px; }
.scroll { flex: 1; background: #f0f0f0; display: flex; flex-direction: column; align-items: center; padding: 3px 0; margin-right: 2px; }
.scroll svg { width: 8px; height: 8px; }
.thumbbar { width: 11px; height: 58px; margin: 3px 0 auto; background: #cdcdcd; }
.foot { display: flex; justify-content: space-between; align-items: center; height: 16px; padding: 0 4px 0 1px; }
.foot a { color: #2a7fc8; }
.foot button { width: 57px; height: 15px; background: #c8c8c8; color: #888; }
.browser { flex: 1; display: flex; flex-direction: column; margin-top: 5px; min-height: 0; }
.browser h2 { flex: none; }
.treewrap { flex: 1; min-height: 0; display: flex; margin-top: 1px; border-left: 1px solid #85858a; border-top: 1px solid #85858a; overflow: hidden; background: #fff; }
.treewrap .thumbbar { height: 84px; margin-top: 3px; }
.tree { width: 221px; margin: 0; padding: 0; list-style: none; white-space: nowrap; overflow: hidden; }
.tree li { display: flex; height: 16px; align-items: center; }
.tree li:nth-child(even) { height: 15px; }
.tree svg { width: 12px; height: 12px; }
.tree span { margin-left: 3px; }
.tree .cur { background: #e0e0e0; color: #111; font-weight: 500; padding: 1px 4px 1px 0; }
.g { position: relative; flex: none; width: 16px; height: 100%; }
.g.v::before, .g.end::before, .g.top0::before { content: ""; position: absolute; left: 6px; top: 0; bottom: 0; border-left: 1px dotted #aaa; }
.g.end::before { bottom: 8px; }
.g.top0::before { top: 8px; }
.g.leaf::after { content: ""; position: absolute; left: 6px; right: -2px; top: 8px; border-top: 1px dotted #aaa; }
.g.box::after { content: ""; position: absolute; left: 3px; top: 4px; width: 7px; height: 7px; border: 1px solid #aaa; background: linear-gradient(#555, #555) center / 3px 1px no-repeat #fff; }
.g.box { background: linear-gradient(90deg, #ccc, #ccc) 10px 7px / 6px 1px no-repeat; }
```
